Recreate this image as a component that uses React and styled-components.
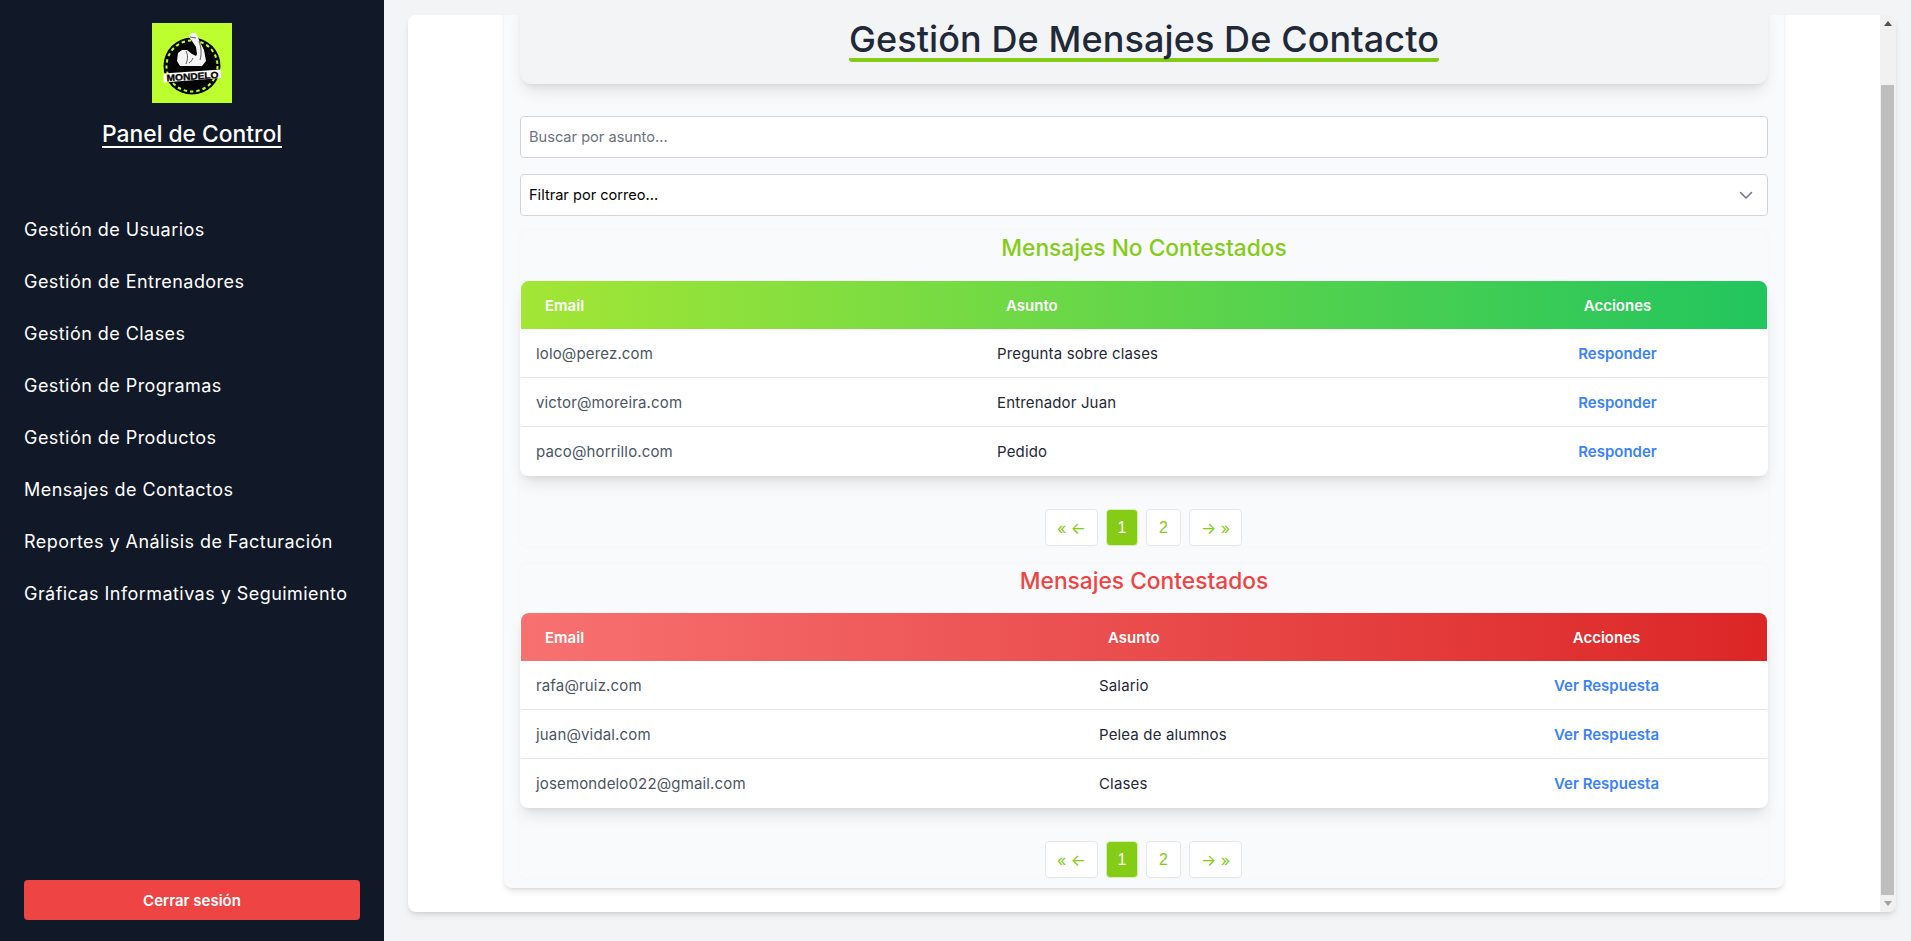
import React, { useLayoutEffect, useRef } from "react";
import styled, { createGlobalStyle } from "styled-components";

const FONT = `"Inter", "Liberation Sans", sans-serif`;

const Global = createGlobalStyle`
  html, body { margin: 0; padding: 0; height: 100%; overflow: hidden; background: #f3f4f6; }
  * { box-sizing: border-box; }
  body { font-family: ${FONT}; }
`;

const Shell = styled.div`
  display: flex;
  height: 941px;
  width: 1911px;
  background: #f3f4f6;
`;

const Sidebar = styled.aside`
  width: 384px;
  flex: none;
  background: #111827;
  color: #fff;
  display: flex;
  flex-direction: column;
  padding: 23px 24px 21px;
`;

const Brand = styled.div`
  display: flex;
  flex-direction: column;
  align-items: center;
`;

const SideTitle = styled.h1`
  margin: 19px 0 0;
  font-size: 22.8px;
  line-height: 24px;
  font-weight: 500;
  border-bottom: 2px solid #fff;
`;

const Nav = styled.nav`
  margin-top: 68px;
  display: flex;
  flex-direction: column;
  gap: 24px;
  flex: 1;
`;

const NavItem = styled.a`
  font-size: 18px;
  line-height: 28px;
  color: #fff;
  letter-spacing: .45px;
`;

const Logout = styled.button`
  height: 40px;
  width: 100%;
  border: 0;
  border-radius: 4px;
  background: #ef4444;
  color: #fff;
  font: 600 15px ${FONT};
`;

const Main = styled.main`
  flex: 1;
  min-width: 0;
  padding: 15px 15px 29px 24px;
  display: flex;
`;

const Card = styled.div`
  flex: 1;
  min-width: 0;
  display: flex;
  background: #fff;
  border-radius: 8px;
  overflow: hidden;
  box-shadow: 0 4px 6px -1px rgba(0,0,0,.1), 0 2px 4px -2px rgba(0,0,0,.1);
`;

const ScrollArea = styled.div`
  flex: 1;
  min-width: 0;
  overflow: hidden;
  padding: 24px 96px;
`;

const Rail = styled.div`
  width: 16px;
  flex: none;
  background: #f1f1f1;
  display: flex;
  flex-direction: column;
`;

const RailArrow = styled.div`
  height: 17px;
  flex: none;
  display: flex;
  align-items: center;
  justify-content: center;
`;

const RailSpace = styled.div`
  flex: 1;
`;

const RailThumb = styled.div`
  height: 810px;
  margin: 0 2px 0 1px;
  background: #bebebe;
  flex: none;
`;

const Panel = styled.section`
  background: #f9fafb;
  border-radius: 8px;
  padding: 16px 16px 10px;
  box-shadow: 0 4px 6px -1px rgba(0,0,0,.1), 0 2px 4px -2px rgba(0,0,0,.1);
`;

const TitleCard = styled.header`
  background: #f3f4f6;
  border-radius: 12px;
  height: 88px;
  padding-top: 24px;
  text-align: center;
  box-shadow: 0 10px 15px -3px rgba(0,0,0,.1), 0 4px 6px -4px rgba(0,0,0,.1);
`;

const PageTitle = styled.h2`
  display: inline-block;
  margin: 0;
  font-size: 36px;
  line-height: 38px;
  font-weight: 500;
  color: #1f2937;
  border-bottom: 4px solid #84cc16;
  border-radius: 3px;
  letter-spacing: .1px;
`;

const SearchInput = styled.input`
  display: block;
  width: 100%;
  height: 42px;
  margin-top: 32px;
  padding: 0 8px;
  background: #fff;
  border: 1px solid #d1d5db;
  border-radius: 4px;
  font: 400 14.6px ${FONT};
  color: #111;
  &::placeholder { color: #6b7280; opacity: 1; }
`;

const SelectBox = styled.div`
  height: 42px;
  margin-top: 16px;
  padding: 0 11px 0 8px;
  background: #fff;
  border: 1px solid #d1d5db;
  border-radius: 4px;
  display: flex;
  align-items: center;
  justify-content: space-between;
  font-size: 14.6px;
  color: #000;
`;

const Section = styled.div`
  margin-top: ${(p) => p.$gap}px;
  background: #f9fafb;
  border-radius: 8px;
  padding-top: 1px;
  box-shadow: 0 0 6px rgba(0,0,0,.025);
`;

const SectionTitle = styled.h3`
  margin: 0 0 ${(p) => p.$below}px;
  text-align: center;
  font-size: 22.75px;
  line-height: 32px;
  font-weight: 500;
  color: ${(p) => p.$color};
`;

const TableWrap = styled.div`
  background: #fff;
  padding: 0 1px 1px;
  border-radius: 8px;
  box-shadow: 0 10px 15px -3px rgba(0,0,0,.1), 0 4px 6px -4px rgba(0,0,0,.1);
`;

const Table = styled.table`
  width: 100%;
  border-collapse: separate;
  border-spacing: 0;
  table-layout: fixed;
`;

const HeadRow = styled.tr`
  background: linear-gradient(to right, ${(p) => p.$from}, ${(p) => p.$to});
  th:first-child { border-top-left-radius: 8px; }
  th:last-child { border-top-right-radius: 8px; }
`;

const Th = styled.th`
  height: 48px;
  padding: 0 24px;
  font-size: 15px;
  font-weight: 600;
  color: #fff;
  text-align: ${(p) => p.$align || "left"};
  width: ${(p) => p.$w}px;
`;

const Td = styled.td`
  height: ${(p) => (p.$last ? 48 : 49)}px;
  padding: 0 15px;
  font-size: 15px;
  letter-spacing: .15px;
  color: ${(p) => p.$color};
  text-align: ${(p) => p.$align || "left"};
  border-bottom: ${(p) => (p.$last ? "0" : "1px solid #e5e7eb")};
`;

const ActionLink = styled.a`
  color: #3b82f6;
  font-weight: 600;
  font-size: 15px;
  letter-spacing: 0;
`;

const Pager = styled.div`
  display: flex;
  justify-content: center;
  gap: 8px;
  margin-top: 33px;
  padding-right: 1px;
  height: 37px;
`;

const PageBtn = styled.button`
  width: ${(p) => p.$w}px;
  border-radius: 4px;
  border: 1px solid ${(p) => (p.$active ? "#d9f0b5" : "#e5e7eb")};
  background: ${(p) => (p.$active ? "#84cc16" : "#fff")};
  color: ${(p) => (p.$active ? "#fff" : "#84cc16")};
  font: 400 16px ${(p) => (p.$arrow ? FONT : `"Liberation Sans", sans-serif`)};
  padding: 0;
`;

const Chevron = () => (
  <svg width="20" height="20" viewBox="0 0 20 20" fill="none">
    <path d="M4.5 7.5l5.5 5.5 5.5-5.5" stroke="#6b7280" strokeWidth="1.5" strokeLinecap="round" strokeLinejoin="round" />
  </svg>
);

const TriangleUp = () => (
  <svg width="8" height="5" viewBox="0 0 8 5"><path d="M4 0l4 5H0z" fill="#505050" /></svg>
);

const TriangleDown = () => (
  <svg width="8" height="5" viewBox="0 0 8 5"><path d="M0 0h8L4 5z" fill="#a0a0a0" /></svg>
);

const Logo = () => (
  <svg width="80" height="80" viewBox="0 0 80 80">
    <rect width="80" height="80" fill="#bdff2e" />
    <circle cx="40" cy="43" r="28.5" fill="#050505" />
    <circle cx="40" cy="43" r="25.5" fill="none" stroke="#bdff2e" strokeWidth="2" strokeDasharray="3.4 3" />
    <path d="M37 14l2-4h5l3 7 5 10 2 11-4 5H28l-3-5 1-8 4-3h5l5 4 4 2 1-2-1-7-4-6z" fill="#f4f4f4" strokeLinejoin="round" />
    <path d="M34 28c2 4 2 8 0 13M41 35c-1 2-2 4-4 5M47 18c2 6 3 12 1 19M38 14l6 1" fill="none" stroke="#333" strokeWidth=".8" />
    <path d="M11.5 50.5L69 46.5 69 55 11.5 59.5z" fill="#fff" />
    <text x="40.5" y="56.6" textAnchor="middle" fontFamily="'Liberation Sans', sans-serif" fontWeight="700" fontSize="9.2" textLength="52" lengthAdjust="spacingAndGlyphs" transform="rotate(-3.6 40 53)" fill="#050505" stroke="#050505" strokeWidth=".35">MONDELO</text>
  </svg>
);

const Pagination = () => (
  <Pager>
    <PageBtn $w={53} $arrow>« ←</PageBtn>
    <PageBtn $w={32} $active>1</PageBtn>
    <PageBtn $w={35}>2</PageBtn>
    <PageBtn $w={53} $arrow>→ »</PageBtn>
  </Pager>
);

const MessageSection = ({ title, color, from, to, widths, action, rows, gap, below }) => (
  <Section $gap={gap}>
    <SectionTitle $color={color} $below={below}>{title}</SectionTitle>
    <TableWrap>
      <Table>
        <thead>
          <HeadRow $from={from} $to={to}>
            <Th $w={widths[0]}>Email</Th>
            <Th $w={widths[1]}>Asunto</Th>
            <Th $w={widths[2]} $align="center">Acciones</Th>
          </HeadRow>
        </thead>
        <tbody>
          {rows.map((r, i) => {
            const last = i === rows.length - 1;
            return (
              <tr key={r[0]}>
                <Td $last={last} $color="#4b5563">{r[0]}</Td>
                <Td $last={last} $color="#1f2937">{r[1]}</Td>
                <Td $last={last} $align="center" $color="#3b82f6"><ActionLink>{action}</ActionLink></Td>
              </tr>
            );
          })}
        </tbody>
      </Table>
    </TableWrap>
    <Pagination />
  </Section>
);

const NAV = [
  "Gestión de Usuarios",
  "Gestión de Entrenadores",
  "Gestión de Clases",
  "Gestión de Programas",
  "Gestión de Productos",
  "Mensajes de Contactos",
  "Reportes y Análisis de Facturación",
  "Gráficas Informativas y Seguimiento",
];

export default function App() {
  const ref = useRef(null);
  useLayoutEffect(() => {
    if (ref.current) ref.current.scrollTop = 100000;
  }, []);
  return (
    <Shell>
      <Global />
      <Sidebar>
        <Brand>
          <Logo />
          <SideTitle>Panel de Control</SideTitle>
        </Brand>
        <Nav>
          {NAV.map((n) => <NavItem key={n}>{n}</NavItem>)}
        </Nav>
        <Logout>Cerrar sesión</Logout>
      </Sidebar>
      <Main>
        <Card>
          <ScrollArea ref={ref}>
            <Panel>
              <TitleCard>
                <PageTitle>Gestión De Mensajes De Contacto</PageTitle>
              </TitleCard>
              <SearchInput placeholder="Buscar por asunto..." />
              <SelectBox>Filtrar por correo...<Chevron /></SelectBox>
              <MessageSection
                gap={15}
                below={17}
                title="Mensajes No Contestados"
                color="#84cc16"
                from="#a3e635"
                to="#22c55e"
                widths={[461, 486, 299]}
                action="Responder"
                rows={[
                  ["lolo@perez.com", "Pregunta sobre clases"],
                  ["victor@moreira.com", "Entrenador Juan"],
                  ["paco@horrillo.com", "Pedido"],
                ]}
              />
              <MessageSection
                gap={18}
                below={16}
                title="Mensajes Contestados"
                color="#ef4444"
                from="#f87171"
                to="#dc2626"
                widths={[563, 362, 321]}
                action="Ver Respuesta"
                rows={[
                  ["rafa@ruiz.com", "Salario"],
                  ["juan@vidal.com", "Pelea de alumnos"],
                  ["josemondelo022@gmail.com", "Clases"],
                ]}
              />
            </Panel>
          </ScrollArea>
          <Rail>
            <RailArrow><TriangleUp /></RailArrow>
            <RailSpace />
            <RailThumb />
            <RailArrow><TriangleDown /></RailArrow>
          </Rail>
        </Card>
      </Main>
    </Shell>
  );
}
